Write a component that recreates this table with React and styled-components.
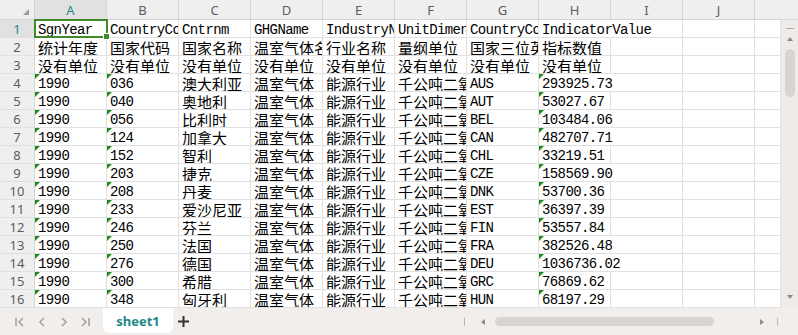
import React from 'react';
import styled, { createGlobalStyle, css } from 'styled-components';

const Global = createGlobalStyle`
  html, body { margin: 0; padding: 0; background: #fff; }
  body { width: 798px; height: 335px; overflow: hidden; }
`;

const COLS = ['A', 'B', 'C', 'D', 'E', 'F', 'G', 'H', 'I', 'J'];

const rowsData = [
  ['SgnYear', 'CountryCode', 'Cntrnm', 'GHGName', 'IndustryName', 'UnitDimension', 'CountryCode3', 'IndicatorValue'],
  ['统计年度', '国家代码', '国家名称', '温室气体名称', '行业名称', '量纲单位', '国家三位英文代码', '指标数值'],
  ['没有单位', '没有单位', '没有单位', '没有单位', '没有单位', '没有单位', '没有单位', '没有单位'],
  ['1990', '036', '澳大利亚', '温室气体', '能源行业', '千公吨二氧化碳当量', 'AUS', '293925.73'],
  ['1990', '040', '奥地利', '温室气体', '能源行业', '千公吨二氧化碳当量', 'AUT', '53027.67'],
  ['1990', '056', '比利时', '温室气体', '能源行业', '千公吨二氧化碳当量', 'BEL', '103484.06'],
  ['1990', '124', '加拿大', '温室气体', '能源行业', '千公吨二氧化碳当量', 'CAN', '482707.71'],
  ['1990', '152', '智利', '温室气体', '能源行业', '千公吨二氧化碳当量', 'CHL', '33219.51'],
  ['1990', '203', '捷克', '温室气体', '能源行业', '千公吨二氧化碳当量', 'CZE', '158569.90'],
  ['1990', '208', '丹麦', '温室气体', '能源行业', '千公吨二氧化碳当量', 'DNK', '53700.36'],
  ['1990', '233', '爱沙尼亚', '温室气体', '能源行业', '千公吨二氧化碳当量', 'EST', '36397.39'],
  ['1990', '246', '芬兰', '温室气体', '能源行业', '千公吨二氧化碳当量', 'FIN', '53557.84'],
  ['1990', '250', '法国', '温室气体', '能源行业', '千公吨二氧化碳当量', 'FRA', '382526.48'],
  ['1990', '276', '德国', '温室气体', '能源行业', '千公吨二氧化碳当量', 'DEU', '1036736.02'],
  ['1990', '300', '希腊', '温室气体', '能源行业', '千公吨二氧化碳当量', 'GRC', '76869.62'],
  ['1990', '348', '匈牙利', '温室气体', '能源行业', '千公吨二氧化碳当量', 'HUN', '68197.29'],
];

const isCJK = (s) => /[\u4e00-\u9fff]/.test(s);
const GREEN = '#3f8a2a';
const TEAL = '#1f8787';
const GRID = '#e0e0e0';
const HEAD_BORDER = '#d4d4d4';

const Sheet = styled.div`
  width: 798px;
  height: 335px;
  display: flex;
  flex-direction: column;
  overflow: hidden;
  background: #fff;
`;

const HeaderRow = styled.div`
  display: grid;
  grid-template-columns: 35px repeat(10, 72px) 43px;
  height: 20px;
  background: #efefef;
`;

const ColHead = styled.div`
  box-sizing: border-box;
  border-right: 1px solid ${HEAD_BORDER};
  border-bottom: 1px solid ${HEAD_BORDER};
  display: flex;
  align-items: center;
  justify-content: center;
  font-family: "Noto Sans", "Liberation Sans", sans-serif;
  font-size: 13px;
  color: #5d5d5d;
  background: #efefef;
  ${(p) => p.$active && css`
    background: #e1e1e1;
    color: ${TEAL};
  `}
  ${(p) => p.$last && css`border-right: none;`}
`;

const Corner = styled(ColHead)`
  position: relative;
  svg { position: absolute; right: 5px; bottom: 4px; }
`;

const Body = styled.div`
  display: flex;
  height: 288px;
`;

const Grid = styled.div`
  display: grid;
  grid-template-columns: 35px repeat(10, 72px) 26px;
  grid-auto-rows: 18px;
  width: 781px;
  background: #fff;
`;

const RowHead = styled.div`
  box-sizing: border-box;
  border-right: 1px solid ${HEAD_BORDER};
  border-bottom: 1px solid ${GRID};
  background: #efefef;
  display: flex;
  align-items: center;
  justify-content: center;
  font-family: "Noto Sans", "Liberation Sans", sans-serif;
  font-size: 13px;
  color: #5d5d5d;
  ${(p) => p.$active && css`
    background: #e1e1e1;
    color: ${TEAL};
  `}
`;

const Cell = styled.div`
  position: relative;
  box-sizing: border-box;
  border-right: 1px solid ${GRID};
  border-bottom: 1px solid ${GRID};
  padding-left: 3px;
  padding-top: 3px;
  white-space: nowrap;
  overflow: hidden;
  color: #000;
  font-family: "Liberation Mono", "DejaVu Sans Mono", monospace;
  font-size: 14px;
  letter-spacing: -0.6px;
  line-height: 14px;
  ${(p) => p.$cjk && css`
    font-family: "Noto Sans CJK SC", sans-serif;
    font-size: 15px;
    letter-spacing: 0;
    line-height: 17px;
    padding-top: 1px;
  `}
  ${(p) => p.$spill && css`
    overflow: visible;
    border-right-color: transparent;
    z-index: 1;
  `}
  ${(p) => p.$flag && css`
    &::before {
      content: '';
      position: absolute;
      left: 0;
      top: 0;
      border-top: 5px solid #1e8a1e;
      border-right: 5px solid transparent;
    }
  `}
  ${(p) => p.$selected && css`
    overflow: visible;
    z-index: 2;
    &::after {
      content: '';
      position: absolute;
      left: -1px;
      top: -1px;
      right: -2px;
      bottom: -1px;
      border: 2px solid ${GREEN};
      pointer-events: none;
    }
  `}
`;

const FillHandle = styled.span`
  position: absolute;
  right: -4px;
  bottom: -3px;
  width: 5px;
  height: 5px;
  background: ${GREEN};
  border: 1px solid #fff;
  z-index: 3;
`;

const VScroll = styled.div`
  width: 17px;
  background: #efebe9;
  display: flex;
  flex-direction: column;
  align-items: center;
  padding-top: 8px;
  box-sizing: border-box;
`;

const Dash = styled.div`
  width: 8px;
  height: 1px;
  background: #a9a9a9;
`;

const Arrow = styled.div`
  width: 0;
  height: 0;
  border-left: 3px solid transparent;
  border-right: 3px solid transparent;
  ${(p) => (p.$down
    ? css`border-top: 4px solid #8a8a8a;`
    : css`border-bottom: 4px solid #8a8a8a;`)}
  margin-top: ${(p) => p.$mt || 0}px;
`;

const VThumb = styled.div`
  width: 10px;
  height: 48px;
  border-radius: 5px;
  background: #d7d4d2;
  margin-top: 8px;
`;

const Spacer = styled.div`
  flex: 1;
`;

const BottomPad = styled.div`
  height: 9px;
`;

const TabBar = styled.div`
  height: 27px;
  background: #f1eeec;
  display: flex;
  align-items: flex-start;
`;

const Nav = styled.div`
  display: flex;
  align-items: center;
  height: 27px;
  padding-left: 15px;
`;

const NavBtn = styled.span`
  display: flex;
  width: ${(p) => p.$w}px;
  align-items: center;
`;

const Tab = styled.div`
  margin-left: 13px;
  width: 70px;
  height: 25px;
  background: #fff;
  border-radius: 0 0 6px 6px;
  display: flex;
  align-items: center;
  justify-content: center;
  font-family: "Noto Sans", "Open Sans", sans-serif;
  font-weight: 700;
  font-size: 13px;
  color: ${TEAL};
`;

const Plus = styled.div`
  margin-left: 5px;
  height: 27px;
  display: flex;
  align-items: center;
`;

const HScroll = styled.div`
  margin-left: auto;
  height: 27px;
  display: flex;
  align-items: center;
  padding-right: 20px;
`;

const Sep = styled.div`
  width: 1px;
  height: 8px;
  background: #b8b8b8;
`;

const HArrow = styled.div`
  width: 0;
  height: 0;
  border-top: 3px solid transparent;
  border-bottom: 3px solid transparent;
  ${(p) => (p.$right
    ? css`border-left: 4px solid #8a8a8a;`
    : css`border-right: 4px solid #8a8a8a;`)}
`;

const HThumb = styled.div`
  width: 219px;
  height: 9px;
  border-radius: 5px;
  background: #d7d4d2;
`;

const Gap = styled.div`
  width: ${(p) => p.$w}px;
`;

const Chevron = ({ dir, bar }) => (
  <svg width="10" height="10" viewBox="0 0 10 10" fill="none" stroke="#a4a4a4" strokeWidth="1.6">
    {dir === 'left' ? (
      <>
        {bar && <line x1="1" y1="1" x2="1" y2="9" />}
        <polyline points={bar ? '8,1 4,5 8,9' : '7,1 3,5 7,9'} />
      </>
    ) : (
      <>
        {bar && <line x1="9" y1="1" x2="9" y2="9" />}
        <polyline points={bar ? '2,1 6,5 2,9' : '3,1 7,5 3,9'} />
      </>
    )}
  </svg>
);

export default function App() {
  return (
    <>
      <Global />
      <Sheet>
        <HeaderRow>
          <Corner>
            <svg width="6" height="6" viewBox="0 0 6 6">
              <polygon points="6,0 6,6 0,6" fill="#9a9a9a" />
            </svg>
          </Corner>
          {COLS.map((c, i) => (
            <ColHead key={c} $active={i === 0}>{c}</ColHead>
          ))}
          <ColHead $last />
        </HeaderRow>
        <Body>
          <Grid>
            {rowsData.map((row, r) => (
              <React.Fragment key={r}>
                <RowHead $active={r === 0}>{r + 1}</RowHead>
                {COLS.map((c, ci) => {
                  const text = row[ci] || '';
                  const cjk = isCJK(text);
                  const spill = ci === 7 && !cjk && text.length >= 9;
                  const flag = r >= 3 && (ci === 0 || ci === 1 || ci === 7);
                  const selected = r === 0 && ci === 0;
                  return (
                    <Cell key={c} $cjk={cjk} $spill={spill} $flag={flag} $selected={selected}>
                      {text}
                      {selected && <FillHandle />}
                    </Cell>
                  );
                })}
                <Cell />
              </React.Fragment>
            ))}
          </Grid>
          <VScroll>
            <Dash />
            <Arrow $mt={8} />
            <VThumb />
            <Spacer />
            <Arrow $down />
            <BottomPad />
          </VScroll>
        </Body>
        <TabBar>
          <Nav>
            <NavBtn $w={22}><Chevron dir="left" bar /></NavBtn>
            <NavBtn $w={22}><Chevron dir="left" /></NavBtn>
            <NavBtn $w={21}><Chevron dir="right" /></NavBtn>
            <NavBtn $w={10}><Chevron dir="right" bar /></NavBtn>
          </Nav>
          <Tab>sheet1</Tab>
          <Plus>
            <svg width="11" height="11" viewBox="0 0 11 11" stroke="#333" strokeWidth="2">
              <line x1="5.5" y1="0" x2="5.5" y2="11" />
              <line x1="0" y1="5.5" x2="11" y2="5.5" />
            </svg>
          </Plus>
          <HScroll>
            <Sep />
            <Gap $w={16} />
            <HArrow />
            <Gap $w={10} />
            <HThumb />
            <Gap $w={46} />
            <HArrow $right />
            <Gap $w={13} />
            <Sep />
          </HScroll>
        </TabBar>
      </Sheet>
    </>
  );
}
